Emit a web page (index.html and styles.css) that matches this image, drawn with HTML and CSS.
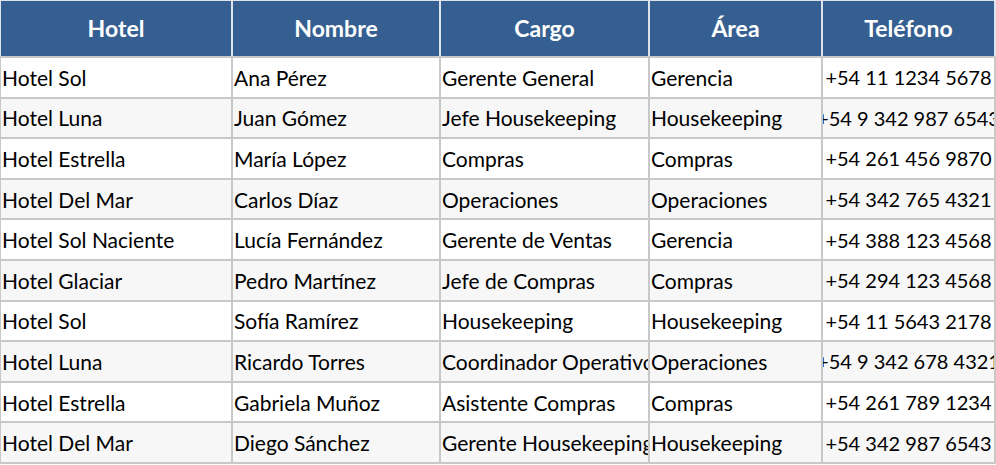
FILE: index.html
```html
<!DOCTYPE html>
<html lang="es">
<head>
<meta charset="utf-8">
<title>Contactos hoteles</title>
<link rel="stylesheet" href="styles.css">
</head>
<body>
<div class="sheet">
  <div class="head">
    <div class="hc">Hotel</div>
    <div class="hc">Nombre</div>
    <div class="hc">Cargo</div>
    <div class="hc">Área</div>
    <div class="hc">Teléfono</div>
  </div>
  <div class="body">
    <div class="c">Hotel Sol</div><div class="c">Ana Pérez</div><div class="c">Gerente General</div><div class="c">Gerencia</div><div class="c ph"><span>+54 11 1234 5678</span></div>
    <div class="c alt">Hotel Luna</div><div class="c alt">Juan Gómez</div><div class="c alt">Jefe Housekeeping</div><div class="c alt">Housekeeping</div><div class="c alt ph"><span>+54 9 342 987 6543</span></div>
    <div class="c">Hotel Estrella</div><div class="c">María López</div><div class="c">Compras</div><div class="c">Compras</div><div class="c ph"><span>+54 261 456 9870</span></div>
    <div class="c alt">Hotel Del Mar</div><div class="c alt">Carlos Díaz</div><div class="c alt">Operaciones</div><div class="c alt">Operaciones</div><div class="c alt ph"><span>+54 342 765 4321</span></div>
    <div class="c">Hotel Sol Naciente</div><div class="c">Lucía Fernández</div><div class="c">Gerente de Ventas</div><div class="c">Gerencia</div><div class="c ph"><span>+54 388 123 4568</span></div>
    <div class="c alt">Hotel Glaciar</div><div class="c alt">Pedro Martínez</div><div class="c alt">Jefe de Compras</div><div class="c alt">Compras</div><div class="c alt ph"><span>+54 294 123 4568</span></div>
    <div class="c">Hotel Sol</div><div class="c">Sofía Ramírez</div><div class="c">Housekeeping</div><div class="c">Housekeeping</div><div class="c ph"><span>+54 11 5643 2178</span></div>
    <div class="c alt">Hotel Luna</div><div class="c alt">Ricardo Torres</div><div class="c alt">Coordinador Operativo</div><div class="c alt">Operaciones</div><div class="c alt ph"><span>+54 9 342 678 4321</span></div>
    <div class="c">Hotel Estrella</div><div class="c">Gabriela Muñoz</div><div class="c">Asistente Compras</div><div class="c">Compras</div><div class="c ph"><span>+54 261 789 1234</span></div>
    <div class="c alt">Hotel Del Mar</div><div class="c alt">Diego Sánchez</div><div class="c alt">Gerente Housekeeping</div><div class="c alt">Housekeeping</div><div class="c alt ph"><span>+54 342 987 6543</span></div>
  </div>
</div>
</body>
</html>
```
FILE: styles.css
```css
html, body {
  margin: 0;
  padding: 0;
  background: #ffffff;
}
.sheet {
  width: 996px;
  font-family: Lato, "Liberation Sans", sans-serif;
}
.head {
  display: grid;
  grid-template-columns: 230px 206px 207px 171px 171px;
  column-gap: 2px;
  padding: 1px 1px 0 1px;
  background: #dde3ea;
}
.hc {
  height: 55px;
  padding-bottom: 2px;
  box-sizing: border-box;
  background: #365f91;
  color: #ffffff;
  font-weight: 700;
  font-size: 23px;
  display: flex;
  align-items: center;
  justify-content: center;
}
.body {
  display: grid;
  grid-template-columns: 230px 206px 207px 171px 171px;
  grid-auto-rows: 38.6px;
  gap: 2px;
  padding: 2px 1px 2px 1px;
  background: #c8c8c8;
}
.c {
  background: #ffffff;
  color: #000000;
  font-size: 21px;
  white-space: nowrap;
  overflow: hidden;
  padding-left: 1px;
  display: flex;
  align-items: center;
}
.c.alt {
  background: #f7f7f7;
}
.c.ph {
  padding-left: 0;
  justify-content: center;
  font-size: 20px;
}
.c.ph span {
  flex: none;
}
```
